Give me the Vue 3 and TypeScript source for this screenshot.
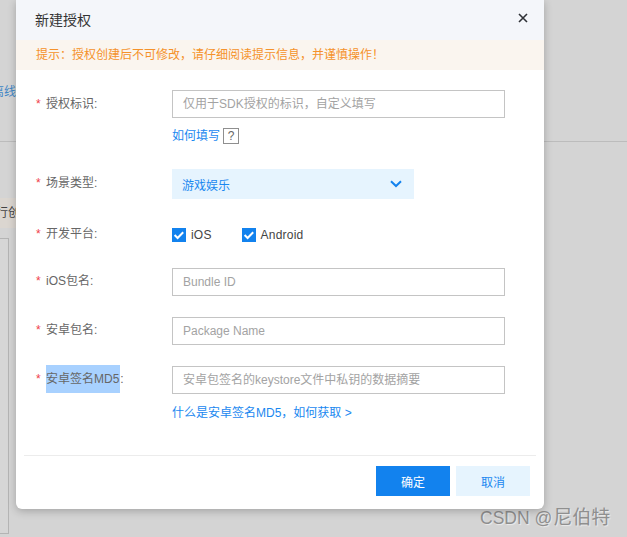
<script setup lang="ts">
interface Field {
  label: string
  placeholder: string
}
const topField: Field = { label: '授权标识:', placeholder: '仅用于SDK授权的标识\uFF0C自定义填写' }
const packageFields: Field[] = [
  { label: 'iOS包名:', placeholder: 'Bundle ID' },
  { label: '安卓包名:', placeholder: 'Package Name' }
]
const platforms = ['iOS', 'Android']
const notice = '提示\uFF1A授权创建后不可修改\uFF0C请仔细阅读提示信息\uFF0C并谨慎操作\uFF01'
const md5Hint = '什么是安卓签名MD5\uFF0C如何获取 >'
</script>

<template>
  <div class="page">
    <div class="bg">
      <div class="bg-link-row"><span class="bg-link">隔离线</span></div>
      <div class="bg-band"><span>执行创</span></div>
      <div class="bg-panel"></div>
      <div class="watermark">CSDN @<span class="wm-cjk">尼伯特</span></div>
    </div>

    <section class="modal">
      <header class="head">
        <h2 class="title">新建授权</h2>
        <svg class="close" width="10" height="10" viewBox="0 0 10 10">
          <path d="M1 1 L9 9 M9 1 L1 9" stroke="#2f3237" stroke-width="1.6" fill="none" />
        </svg>
      </header>
      <div class="notice">{{ notice }}</div>

      <div class="form">
        <div class="row">
          <label class="label nudge-1"><i>*</i><span>{{ topField.label }}</span></label>
          <div class="control">
            <div class="input">{{ topField.placeholder }}</div>
            <div class="hint">如何填写<span class="qmark">?</span></div>
          </div>
        </div>

        <div class="row row-select">
          <label class="label nudge-1"><i>*</i><span>场景类型:</span></label>
          <div class="control">
            <div class="select">
              <span>游戏娱乐</span>
              <svg width="12" height="8" viewBox="0 0 12 8">
                <path d="M1 1.2 L6 6 L11 1.2" stroke="#1282ee" stroke-width="2" fill="none" />
              </svg>
            </div>
          </div>
        </div>

        <div class="row">
          <label class="label nudge-2"><i>*</i><span>开发平台:</span></label>
          <div class="control checks">
            <span v-for="p in platforms" :key="p" class="check">
              <svg width="14" height="14" viewBox="0 0 14 14">
                <rect width="14" height="14" fill="#1282ee" />
                <path d="M2.6 7 L5.6 10 L11.2 4.2" stroke="#fff" stroke-width="2" fill="none" />
              </svg>
              {{ p }}
            </span>
          </div>
        </div>

        <div v-for="f in packageFields" :key="f.label" class="row">
          <label class="label"><i>*</i><span>{{ f.label }}</span></label>
          <div class="control">
            <div class="input">{{ f.placeholder }}</div>
          </div>
        </div>

        <div class="row">
          <label class="label"><i>*</i><span><mark>安卓签名MD5</mark>:</span></label>
          <div class="control">
            <div class="input">安卓包签名的keystore文件中私钥的数据摘要</div>
            <div class="hint hint-tall">{{ md5Hint }}</div>
          </div>
        </div>
      </div>

      <footer class="foot">
        <button class="btn primary">确定</button>
        <button class="btn ghost">取消</button>
      </footer>
    </section>
  </div>
</template>

<style>
html, body { margin: 0; padding: 0; background: #d4d4d4; }
</style>

<style scoped>
.page {
  position: relative;
  width: 627px;
  height: 537px;
  overflow: hidden;
  background: #d4d4d4;
  font-family: "Liberation Sans", "Noto Sans CJK SC", sans-serif;
  font-size: 12px;
  color: #666;
}
.bg { height: 100%; display: flex; flex-direction: column; }
.bg-link-row {
  height: 142px;
  box-sizing: border-box;
  padding-top: 84px;
  line-height: 17px;
  margin: 0 -20px;
  border-bottom: 1px solid #bcbcbc;
}
.bg-link { color: #3f86c6; }
.bg-band {
  margin-top: 56px;
  height: 30px;
  line-height: 30px;
  width: 20px;
  overflow: hidden;
  background: #dbd6d0;
  color: #444;
  direction: rtl;
  white-space: nowrap;
}
.bg-panel {
  margin-top: 10px;
  width: 8px;
  height: 294px;
  border: 1px solid #b4b4b4;
  border-left: 0;
  background: #d6d6d6;
}
.watermark {
  position: absolute;
  left: 480px;
  top: 505px;
  line-height: 26px;
  font-size: 17.5px;
  color: #8f8f8f;
  text-shadow: 1px 1px 1px #ececec;
  white-space: nowrap;
}
.wm-cjk { font-size: 19px; margin-left: 1px; }

.modal {
  position: absolute;
  left: 16px;
  top: 0;
  width: 528px;
  background: #fff;
  border-radius: 0 0 6px 6px;
  box-shadow: 0 2px 8px rgba(0, 0, 0, 0.24);
}
.head {
  height: 40px;
  box-sizing: border-box;
  padding: 0 16px 0 19px;
  display: flex;
  align-items: center;
  justify-content: space-between;
  background: #f4f6fa;
}
.title { margin: -2px 0 0; font-size: 14px; font-weight: 400; color: #333; }
.close { margin-top: -4px; }
.notice {
  height: 30px;
  line-height: 30px;
  padding-left: 20px;
  background: #faf5ef;
  color: #f5922a;
}
.form {
  padding: 19px 39px 27px 20px;
  display: flex;
  flex-direction: column;
  gap: 20px;
}
.row { display: flex; align-items: flex-start; }
.row-select { margin-bottom: -1px; }
.label {
  width: 136px;
  height: 28px;
  box-sizing: border-box;
  flex: none;
  display: flex;
  line-height: 28px;
  color: #666;
}
.nudge-1 { padding-top: 1px; }
.nudge-2 { padding-top: 2px; }
.label i {
  width: 10px;
  flex: none;
  font-style: normal;
  color: #f0404a;
}
.label mark { background: #a8d1ff; color: #666; display: inline-block; padding-right: 1px; }
.control { flex: 1; margin-top: 1px; }
.input {
  height: 28px;
  line-height: 26px;
  box-sizing: border-box;
  border: 1px solid #c4c4c4;
  padding-left: 10px;
  color: #a3a3a3;
}
.hint {
  height: 30px;
  box-sizing: border-box;
  padding-top: 3px;
  color: #1a88f0;
  display: flex;
  align-items: center;
}
.hint-tall { height: 34px; padding-top: 0; }
.qmark {
  width: 16px;
  height: 16px;
  box-sizing: border-box;
  margin: 2px 0 0 3px;
  border: 1px solid #8f8f8f;
  color: #666;
  font-size: 12px;
  line-height: 15px;
  text-align: center;
}
.select {
  width: 242px;
  height: 30px;
  box-sizing: border-box;
  padding: 0 12px 0 10px;
  background: #e6f4fe;
  color: #1a88f0;
  display: flex;
  align-items: center;
  justify-content: space-between;
}
.checks {
  height: 28px;
  padding-top: 9px;
  box-sizing: border-box;
  display: flex;
  gap: 30px;
}
.check {
  display: flex;
  align-items: center;
  gap: 5px;
  height: 14px;
  color: #444;
  letter-spacing: 0.2px;
}
.foot {
  border-top: 1px solid #ececec;
  margin: 0 8px;
  padding: 10px 6px 13px;
  display: flex;
  justify-content: flex-end;
  gap: 6px;
}
.btn {
  width: 74px;
  height: 30px;
  border: 0;
  padding: 0;
  font: inherit;
}
.primary { background: #1282ee; color: #fff; }
.ghost { background: #e6f4fe; color: #1a88f0; }
</style>
